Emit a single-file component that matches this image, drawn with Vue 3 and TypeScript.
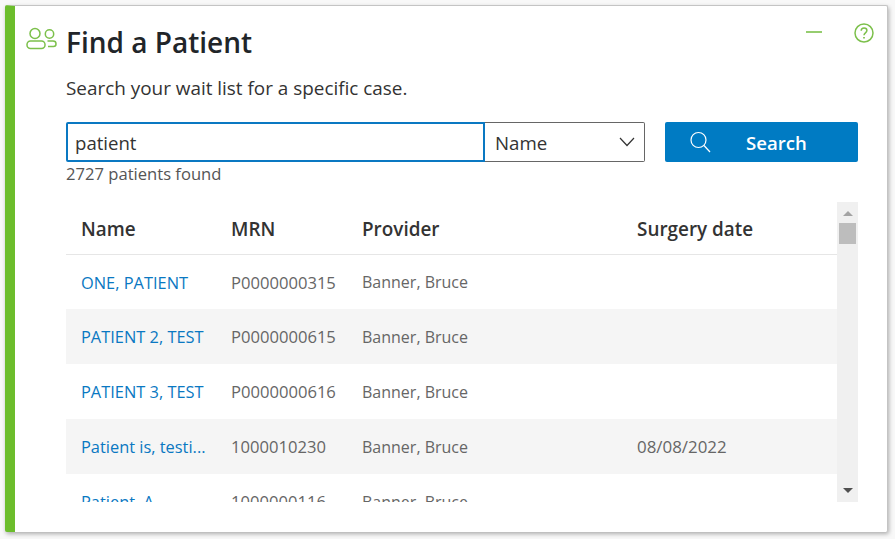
<template>
  <div class="page">
    <section class="card">
      <div class="top-actions">
        <button class="icon-btn" aria-label="Minimize">
          <svg width="18" height="18" viewBox="0 0 18 18"><path d="M1 8h16" stroke="#7cc04b" stroke-width="1.6" fill="none" /></svg>
        </button>
        <button class="icon-btn" aria-label="Help">
          <svg width="22" height="22" viewBox="0 0 22 22" fill="none" stroke="#7cc04b" stroke-width="1.5">
            <circle cx="11" cy="11" r="9" />
            <path d="M8.2 8.8c0-1.7 1.3-2.8 2.9-2.8s2.8 1 2.8 2.5c0 2.4-2.9 2.300-2.900 4.700" />
            <path d="M11 15v1.600" stroke-width="1.700" />
          </svg>
        </button>
      </div>

      <header class="title-row">
        <svg class="people" width="31" height="23" viewBox="0 0 31 23" fill="none" stroke="#7cc04b" stroke-width="1.500">
          <circle cx="9" cy="6.500" r="5" />
          <rect x="1" y="14" width="18" height="7.500" rx="3.500" />
          <circle cx="23.500" cy="7" r="4.200" />
          <path d="M21.500 14h5.500c1.800 0 3 1 3 2.700v.3c0 1.500-1 2.500-2.500 2.500H22" />
        </svg>
        <h1>Find a Patient</h1>
      </header>

      <div class="content">
        <p class="subtitle">Search your wait list for a specific case.</p>

        <div class="search-row">
          <div class="search-field">
            <input class="search-input" type="text" value="patient" />
            <div class="select">
              <span>Name</span>
              <svg width="16" height="10" viewBox="0 0 16 10" fill="none" stroke="#333" stroke-width="1.200"><path d="M1 1l7 7.500L15 1" /></svg>
            </div>
          </div>
          <button class="search-btn">
            <svg width="22" height="22" viewBox="0 0 22 22" fill="none" stroke="#fff" stroke-width="1.200">
              <circle cx="9.500" cy="9" r="7.500" />
              <path d="M15 14.500l6 6.500" />
            </svg>
            <span>Search</span>
          </button>
        </div>
        <div class="found">2727 patients found</div>

        <div class="table-wrap">
          <div class="table">
            <div class="row head">
              <div class="cell">Name</div>
              <div class="cell">MRN</div>
              <div class="cell">Provider</div>
              <div class="cell">Surgery date</div>
            </div>
            <div v-for="p in patients" :key="p.mrn" class="row">
              <div class="cell name">{{ p.name }}</div>
              <div class="cell mrn">{{ p.mrn }}</div>
              <div class="cell">{{ p.provider }}</div>
              <div class="cell date">{{ p.date }}</div>
            </div>
          </div>
          <div class="scrollbar">
            <span class="arrow up"></span>
            <span class="thumb"></span>
            <span class="arrow down"></span>
          </div>
        </div>
      </div>
    </section>
  </div>
</template>

<script setup lang="ts">
interface Patient {
  name: string;
  mrn: string;
  provider: string;
  date: string;
}

const patients: Patient[] = [
  { name: 'ONE, PATIENT', mrn: 'P0000000315', provider: 'Banner, Bruce', date: '' },
  { name: 'PATIENT 2, TEST', mrn: 'P0000000615', provider: 'Banner, Bruce', date: '' },
  { name: 'PATIENT 3, TEST', mrn: 'P0000000616', provider: 'Banner, Bruce', date: '' },
  { name: 'Patient is, testi...', mrn: '1000010230', provider: 'Banner, Bruce', date: '08/08/2022' },
  { name: 'Patient, A', mrn: '1000000116', provider: 'Banner, Bruce', date: '' },
];
</script>

<style>
html,
body {
  margin: 0;
  background: #f8f8f8;
}
</style>

<style scoped>
.page {
  height: 539px;
  width: 895px;
  box-sizing: border-box;
  padding: 5px 7px 7px 5px;
  font-family: "Open Sans", "Noto Sans", sans-serif;
  overflow: hidden;
}

.card {
  position: relative;
  height: 100%;
  box-sizing: border-box;
  background: #fff;
  border-left: 10px solid #6cbd2c;
  border-top: 1px solid #c4c4c4;
  border-right: 1px solid #c4c4c4;
  border-radius: 2px;
  box-shadow: 1px 2px 4px rgba(0, 0, 0, 0.3);
}

.top-actions {
  position: absolute;
  top: 16px;
  right: 12px;
  display: flex;
  align-items: center;
  gap: 30px;
}

.icon-btn {
  display: flex;
  padding: 0;
  border: 0;
  background: none;
}

.title-row {
  display: flex;
  align-items: flex-start;
  gap: 9px;
  padding: 20px 0 0 11px;
}

.people {
  margin-top: 1px;
}

h1 {
  margin: 0;
  font-size: 28px;
  line-height: 32px;
  font-weight: 600;
  color: #212529;
}

.content {
  padding: 0 29px 0 51px;
}

.subtitle {
  margin: 18px 0 0;
  font-size: 18.9px;
  line-height: 24px;
  color: #333;
}

.search-row {
  display: flex;
  margin-top: 22px;
  gap: 20px;
}

.search-field {
  flex: 1;
  display: flex;
  height: 40px;
}

.search-input {
  width: 419px;
  box-sizing: border-box;
  height: 40px;
  padding: 0 7px;
  border: 2px solid #0a78c2;
  border-radius: 2px 0 0 2px;
  font: inherit;
  font-size: 18.6px;
  color: #333;
  outline: none;
}

.select {
  flex: 1;
  display: flex;
  align-items: center;
  justify-content: space-between;
  box-sizing: border-box;
  padding: 0 9px 0 10px;
  border: 1px solid #666;
  border-left: 0;
  border-radius: 0 2px 2px 0;
  font-size: 18.7px;
  color: #333;
}

.search-btn {
  width: 193px;
  height: 40px;
  display: flex;
  align-items: center;
  padding: 0 0 0 24px;
  border: 0;
  border-radius: 2px;
  background: #007bc3;
  color: #fff;
  font: inherit;
  font-size: 18.6px;
  font-weight: 600;
}

.search-btn span {
  margin-left: 35px;
}

.found {
  margin-top: 1px;
  font-size: 16.6px;
  line-height: 22px;
  color: #555;
}

.table-wrap {
  display: flex;
  height: 300px;
  margin-top: 17px;
  overflow: hidden;
}

.table {
  flex: 1;
  overflow: hidden;
}

.row {
  display: grid;
  grid-template-columns: 150px 131px 275px 1fr;
  align-items: center;
  height: 55px;
  font-size: 16px;
  color: #666;
}

.row:nth-child(odd) {
  background: #f5f5f5;
}

.row:nth-child(2) {
  height: 54px;
}

.row.head {
  height: 53px;
  padding-top: 2px;
  background: #fff;
  border-bottom: 1px solid #e6e6e6;
  box-sizing: border-box;
  font-size: 18.9px;
  font-weight: 600;
  color: #333;
}

.cell {
  padding-left: 15px;
  white-space: nowrap;
}

.name {
  font-size: 16.4px;
  color: #0a78c2;
}

.mrn {
  font-size: 16.6px;
}

.date {
  font-size: 16.9px;
}

.scrollbar {
  position: relative;
  flex: none;
  width: 21px;
  display: flex;
  flex-direction: column;
  align-items: center;
  background: #f0f0f0;
}

.arrow {
  width: 0;
  height: 0;
  border-left: 5px solid transparent;
  border-right: 5px solid transparent;
}

.arrow.up {
  margin-top: 9px;
  border-bottom: 5px solid #a3a3a3;
}

.thumb {
  width: 17px;
  height: 21px;
  margin-top: 7px;
  background: #bdbdbd;
}

.arrow.down {
  margin-top: auto;
  margin-bottom: 9px;
  border-top: 5px solid #505050;
}
</style>
